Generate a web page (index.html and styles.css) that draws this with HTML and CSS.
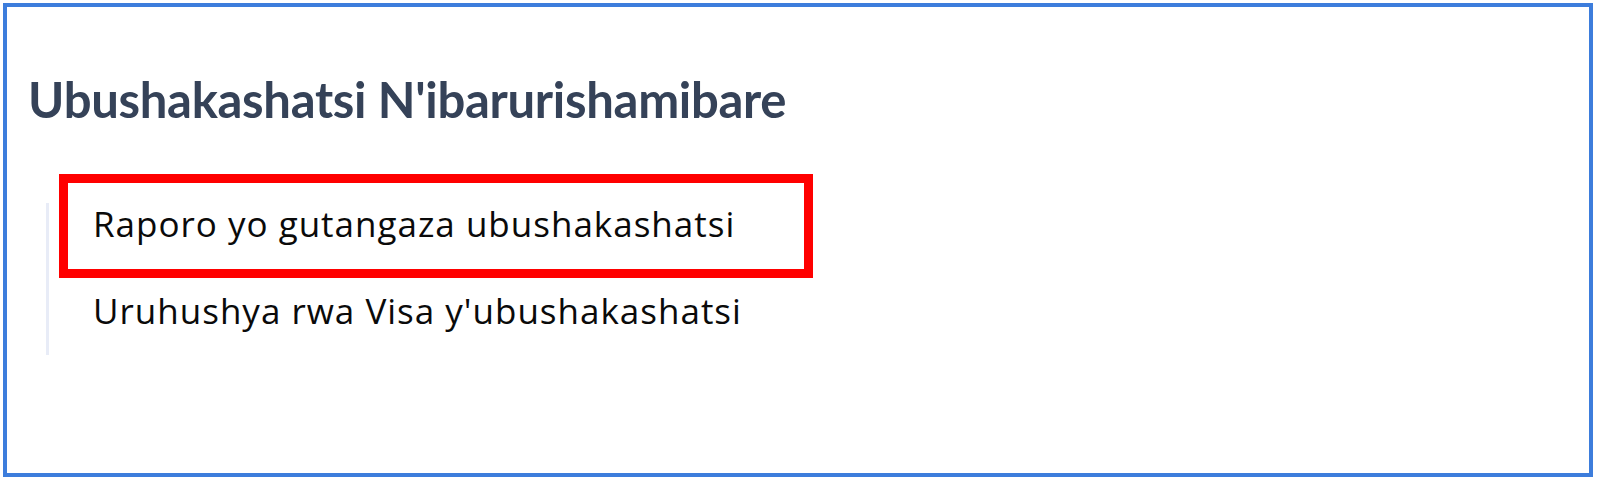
FILE: index.html
```html
<!DOCTYPE html>
<html lang="rw">

<head>
	<meta charset="UTF-8">
	<meta name="viewport" content="width=device-width, initial-scale=1.0">
	<title>Ubushakashatsi N'ibarurishamibare</title>
	<link rel="stylesheet" href="styles.css">
</head>

<body>
	<div class="frame">
		<h1 class="section-title">Ubushakashatsi N'ibarurishamibare</h1>

		<ul class="link-list">
			<li class="link-item is-marked">Raporo yo gutangaza ubushakashatsi</li>
			<li class="link-item">Uruhushya rwa Visa y'ubushakashatsi</li>
		</ul>
	</div>
</body>

</html>
```

FILE: styles.css
```css
body {
	margin: 0;
	padding: 3px 7px 7px 3px;
	font-family: "Open Sans", "Noto Sans", Arial, sans-serif;
	background: #fff;
}

.frame {
	box-sizing: border-box;
	width: 1590px;
	height: 474px;
	padding: 62px 21px 0;
	border: 4px solid #3d7ddc;
}

.section-title {
	margin: 0;
	font-family: Lato, "Open Sans", Arial, sans-serif;
	font-size: 49px;
	line-height: 60px;
	font-weight: 700;
	letter-spacing: -0.3px;
	color: #354258;
}

.link-list {
	display: flex;
	flex-direction: column;
	gap: 46px;
	list-style: none;
	margin: 74px 0 0 18px;
	padding: 0 0 24px;
	border-left: 3px solid #e8ecf7;
}

.link-item {
	position: relative;
	padding-left: 44px;
	font-size: 35px;
	line-height: 41px;
	letter-spacing: 1px;
	color: #0a0a0a;
}

/* red annotation box drawn over the first link */
.link-item.is-marked::after {
	content: "";
	position: absolute;
	left: 10px;
	top: -29px;
	box-sizing: border-box;
	width: 754px;
	height: 104px;
	border: 9px solid #ff0000;
}
```
